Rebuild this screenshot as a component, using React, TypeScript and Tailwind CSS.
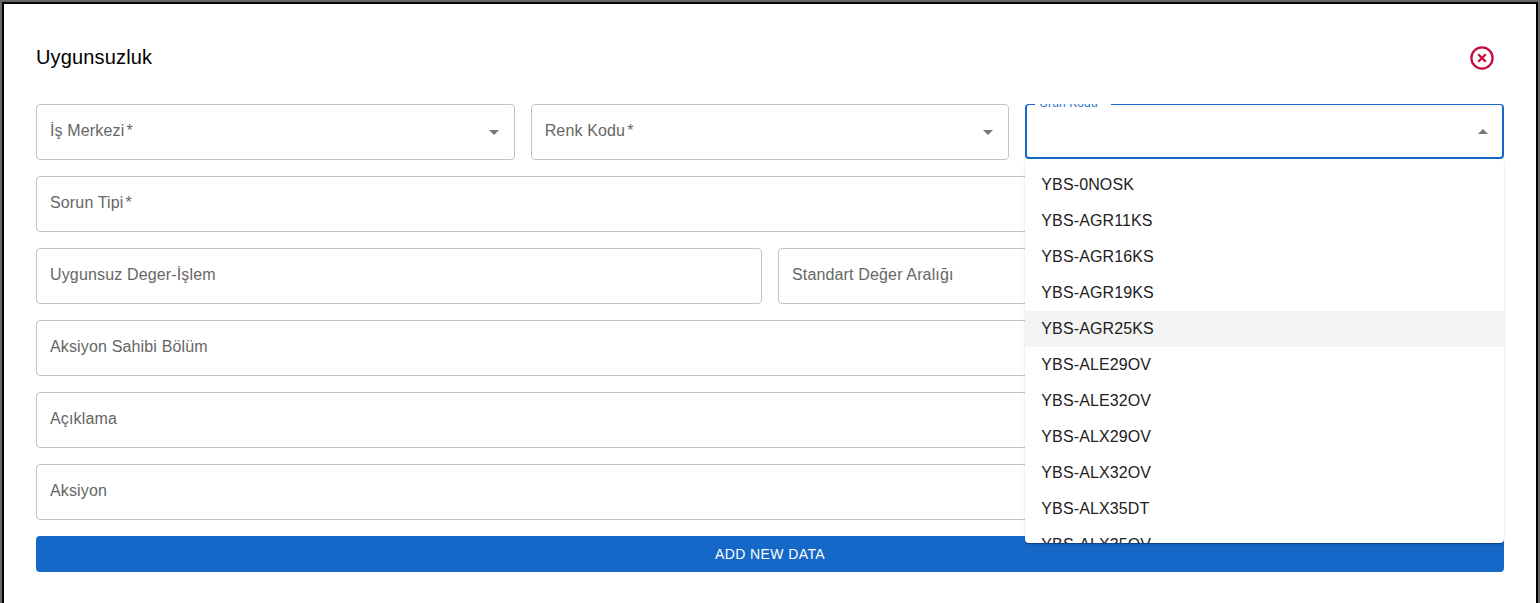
import type { ReactNode } from 'react';

const options = [
  'YBS-0NOSK',
  'YBS-AGR11KS',
  'YBS-AGR16KS',
  'YBS-AGR19KS',
  'YBS-AGR25KS',
  'YBS-ALE29OV',
  'YBS-ALE32OV',
  'YBS-ALX29OV',
  'YBS-ALX32OV',
  'YBS-ALX35DT',
  'YBS-ALX35OV',
];

function Arrow({ up = false }: { up?: boolean }) {
  return (
    <svg viewBox="0 0 24 24" className="size-6 fill-[#757575]">
      <path d={up ? 'M7 14l5-5 5 5z' : 'M7 10l5 5 5-5z'} />
    </svg>
  );
}

function Field({ label, required = false, children }: { label: string; required?: boolean; children?: ReactNode }) {
  return (
    <div className="flex h-14 min-w-0 items-center justify-between rounded-[4px] border border-[#c4c4c4] pr-[8px] pl-[13px]">
      <span className="relative -top-[2px] text-base leading-[23px] tracking-[0.15px] whitespace-nowrap text-[#666666]">
        {label}
        {required && <span className="ml-[2px]">*</span>}
      </span>
      {children}
    </div>
  );
}

function OptionMenu() {
  return (
    <ul className="absolute top-[55px] left-0 z-10 h-[384px] w-full overflow-hidden rounded-[4px] bg-white pt-2 shadow-[0_2px_1px_-1px_rgba(0,0,0,0.2),0_1px_1px_0_rgba(0,0,0,0.14),0_1px_3px_0_rgba(0,0,0,0.12)]">
      {options.map((option) => (
        <li
          key={option}
          className={`flex h-9 items-center px-4 text-base tracking-[0.12px] text-[#212121] ${
            option === 'YBS-AGR25KS' ? 'bg-[#f4f4f4]' : ''
          }`}
        >
          {option}
        </li>
      ))}
    </ul>
  );
}

function ActiveSelect() {
  return (
    <div className="relative h-14 min-w-0">
      <div className="relative flex h-[55px] items-center justify-end rounded-[4px] border-2 border-t-1 border-[#1567c8] pt-[2px] pr-[7px]">
        <Arrow up />
        <div className="absolute -top-[1px] left-[8px] h-[5px] w-[76px] overflow-hidden bg-white">
          <span className="absolute -top-[8px] left-[4px] text-xs leading-[14px] tracking-[0.11px] whitespace-nowrap text-[#1976d2]">
            Ürün Kodu
          </span>
        </div>
      </div>
      <OptionMenu />
    </div>
  );
}

export default function App() {
  return (
    <div className="h-[603px] overflow-hidden bg-[#666666] px-[2px] pt-[2px] font-['Liberation_Sans',Arial,sans-serif]">
      <main className="h-[601px] border-2 border-b-0 border-black bg-white px-8 pt-8">
        <header className="flex h-11 items-center justify-between pr-[9px] pb-[2px]">
          <h1 className="text-xl leading-8 tracking-[0.15px] text-black">Uygunsuzluk</h1>
          <button type="button" aria-label="Close" className="mt-[1px]">
            <svg viewBox="0 0 26 26" className="size-[26px] fill-none stroke-[#c80a3c]">
              <circle cx="13" cy="13" r="10.6" strokeWidth="2.3" />
              <path d="M9.2 9.2l7.6 7.6M16.8 9.2l-7.6 7.6" strokeWidth="2.3" />
            </svg>
          </button>
        </header>
        <form className="mt-6 flex flex-col gap-4">
          <div className="grid grid-cols-3 gap-4">
            <Field label="İş Merkezi" required>
              <Arrow />
            </Field>
            <Field label="Renk Kodu" required>
              <Arrow />
            </Field>
            <ActiveSelect />
          </div>
          <Field label="Sorun Tipi" required />
          <div className="grid grid-cols-2 gap-4">
            <Field label="Uygunsuz Deger-İşlem" />
            <Field label="Standart Değer Aralığı" />
          </div>
          <Field label="Aksiyon Sahibi Bölüm" />
          <Field label="Açıklama" />
          <Field label="Aksiyon" />
          <button
            type="button"
            className="h-9 rounded-[4px] bg-[#1567c8] text-sm tracking-[0.4px] text-white"
          >
            ADD NEW DATA
          </button>
        </form>
      </main>
    </div>
  );
}
